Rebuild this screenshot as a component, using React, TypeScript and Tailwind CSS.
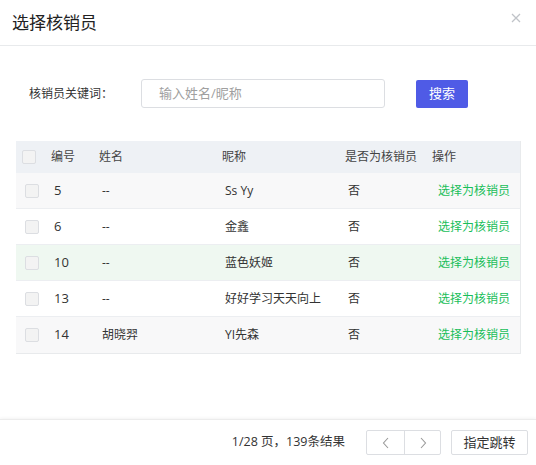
import React from "react";

const rows = [
  { id: "5", name: "--", nick: "Ss Yy", bg: "bg-[#f8f8f9]" },
  { id: "6", name: "--", nick: "金鑫", bg: "bg-white" },
  { id: "10", name: "--", nick: "蓝色妖姬", bg: "bg-[#eff8f1]" },
  { id: "13", name: "--", nick: "好好学习天天向上", bg: "bg-white" },
  { id: "14", name: "胡晓羿", nick: "YI先森", bg: "bg-[#f8f8f9]" },
];

const cols = "grid grid-cols-[35px_48px_123px_123px_87px_1fr] items-center";

function Box() {
  return <span className="block w-[14px] h-[14px] rounded-[2px] border border-[#dcdee2] bg-[#f3f3f3]" />;
}

export default function App() {
  return (
    <div
      className="relative w-[536px] h-[465px] bg-white flex flex-col text-[#333]"
      style={{ fontFamily: '"Open Sans", "Noto Sans CJK SC", sans-serif' }}
    >
      <div className="h-[46px] border-b border-[#e8eaec] flex items-center px-3 shrink-0">
        <h2 className="text-[17px] leading-none text-[#222]">选择核销员</h2>
        <svg className="absolute right-[15px] top-[13px]" width="10" height="10" viewBox="0 0 10 10" stroke="#c0c3c8" strokeWidth="1.3">
          <path d="M1 1 9 9M9 1 1 9" />
        </svg>
      </div>

      <div className="flex items-center mt-[33px] pl-[29px] shrink-0">
        <label className="w-[112px] text-[12px]">核销员关键词：</label>
        <div className="w-[244px] h-[29px] border border-[#dcdee2] rounded-[3px] flex items-center pl-[17px] text-[13px] text-[#a0a0a0]">
          输入姓名/昵称
        </div>
        <button className="ml-[31px] w-[52px] h-[28px] rounded-[2px] bg-[#4f5be6] text-white text-[13px]">
          搜索
        </button>
      </div>

      <div className="mt-[33px] mx-[16px] w-[505px] border-r border-b border-[#e8eaec] text-[12px] shrink-0">
        <div className={`${cols} h-[32px] bg-[#eef1f5] text-[#444]`}>
          <div className="pl-[6px]"><Box /></div>
          <div>编号</div>
          <div>姓名</div>
          <div>昵称</div>
          <div>是否为核销员</div>
          <div>操作</div>
        </div>
        {rows.map((r, i) => (
          <div key={r.id} className={`${cols} h-[36px] ${r.bg} ${i < rows.length - 1 ? "border-b border-[#eceef1]" : ""}`}>
            <div className="pl-[9px]"><Box /></div>
            <div className="pl-[3px] text-[13px]">{r.id}</div>
            <div className="pl-[3px]">{r.name}</div>
            <div className="pl-[3px]">{r.nick}</div>
            <div className="pl-[3px]">否</div>
            <div className="pl-[6px] text-[#19be5a]">选择为核销员</div>
          </div>
        ))}
      </div>

      <div className="flex-1" />

      <div className="h-[46px] shrink-0 border-t border-[#ececec] shadow-[0_-1px_3px_rgba(0,0,0,0.05)] flex items-center justify-end pr-[8px] text-[13px]">
        <span className="mr-[21px] text-[12.5px]">1/28 页，139条结果</span>
        <div className="flex h-[25px] border border-[#dcdee2] rounded-[2px] mr-[10px] text-[#999]">
          <span className="w-[38px] flex items-center justify-center border-r border-[#dcdee2]">
            <svg width="8" height="12" viewBox="0 0 8 12" fill="none" stroke="#999" strokeWidth="1.1"><path d="M6 1 1.5 6 6 11" /></svg>
          </span>
          <span className="w-[35px] flex items-center justify-center">
            <svg width="8" height="12" viewBox="0 0 8 12" fill="none" stroke="#999" strokeWidth="1.1"><path d="M2 1 6.5 6 2 11" /></svg>
          </span>
        </div>
        <button className="w-[77px] h-[25px] border border-[#dcdee2] rounded-[2px] text-[13px]">指定跳转</button>
      </div>
    </div>
  );
}
